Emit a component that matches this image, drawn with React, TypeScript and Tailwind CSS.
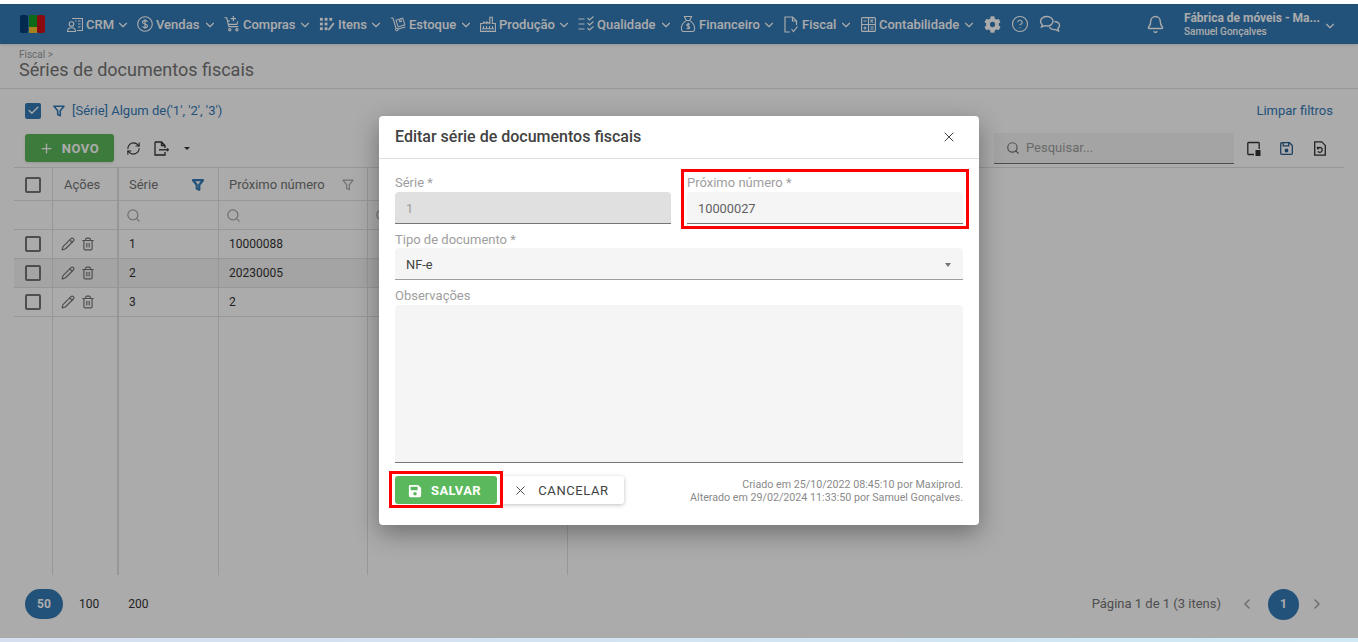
import React from 'react';
import { ChevronDown, ChevronLeft, ChevronRight, CircleHelp, Bell, RefreshCw, Plus, X, Search, Pencil, Trash2, Check } from 'lucide-react';
import { FaCog, FaSave } from 'react-icons/fa';

const Crm = () => (
  <svg width="16" height="17" viewBox="0 0 16 17" fill="none" stroke="currentColor" strokeWidth="1.1" className="shrink-0">
    <circle cx="4.500" cy="8" r="2.300" /><path d="M.5 15.500c0-2.500 1.500-3.700 4-3.700s4 1.200 4 3.700z" />
    <path d="M5 2.500h10.500v12H10" /><path d="M8 5h1.500M11 5h2.500M11 8h2.500M11 11h2.500" />
  </svg>
);
const Dollar = () => (
  <svg width="16" height="16" viewBox="0 0 16 16" fill="none" stroke="currentColor" strokeWidth="1.100" className="shrink-0">
    <circle cx="8" cy="8" r="7.300" />
    <path d="M10.500 5.700C10 4.300 5.500 4 5.500 6.200c0 2.300 5 1.300 5 3.700 0 2.200-4.500 2-5 .5M8 3v10" />
  </svg>
);
const Cart = () => (
  <svg width="16" height="18" viewBox="0 0 18 20" fill="none" stroke="currentColor" strokeWidth="1.300" className="shrink-0">
    <path d="M.5 3h2.500l2.500 10h10.500" /><path d="M4 6.500h2.500M15.500 7l-1 3.500H5" /><path d="M10.500 1v6M7.500 4h6" />
    <circle cx="6.500" cy="16.500" r="1.300" /><circle cx="14.500" cy="16.500" r="1.300" />
  </svg>
);
const Itens = () => (
  <svg width="16" height="16" viewBox="0 0 17 17" fill="currentColor" className="shrink-0">
    <rect x="1" y="2" width="3" height="3" /><rect x="6" y="2" width="3" height="3" /><rect x="11" y="2" width="3" height="3" />
    <rect x="1" y="7" width="3" height="3" /><rect x="6" y="7" width="3" height="3" />
    <rect x="1" y="12" width="3" height="3" /><rect x="6" y="12" width="3" height="3" />
    <path d="M10 13.500 15 7l1.500 1.200-5 6.500-2 .6z" />
  </svg>
);
const Truck = () => (
  <svg width="17" height="16" viewBox="0 0 20 18" fill="none" stroke="currentColor" strokeWidth="1.200" className="shrink-0">
    <path d="M1 2h2.500l3.500 12" /><circle cx="8" cy="15.500" r="1.500" /><path d="M9.500 15 18 12.500" />
    <path d="M7 4.500 15 2l2.500 8-8 2.500z" /><path d="M10.500 3.500l1 3 2-.6-1-3" />
  </svg>
);
const FactoryIcon = () => (
  <svg width="16" height="16" viewBox="0 0 16 16" fill="none" stroke="currentColor" strokeWidth="1.100" className="shrink-0">
    <path d="M.6 15.400V7.500h3.200V6l3 1.500V6l3 1.500V1.200h2.500v6.300h3.100v7.900z" />
    <path d="M3.500 10v2.700M6.500 10v2.700M9.500 10v2.700M12.500 10v2.700M2 12.800h12" />
  </svg>
);
const Checks = () => (
  <svg width="16" height="16" viewBox="0 0 16 16" fill="none" stroke="currentColor" strokeWidth="1.100" className="shrink-0">
    <path d="M.5 3h6M.5 8h6M.5 13h6" />
    <path d="M9.500 2l2 2 4-3.500M9.500 7l2 2 4-3.500M9.500 12l2 2 4-3.500" />
  </svg>
);
const Bag = () => (
  <svg width="16" height="18" viewBox="0 0 18 20" fill="none" stroke="currentColor" strokeWidth="1.200" className="shrink-0">
    <path d="M5 1.500h8l-2 4.500H7z" /><path d="M6.500 6.500C3 9 1.500 12 1.500 15c0 2.500 1.500 3.500 3.500 3.500h8c2 0 3.500-1 3.500-3.500 0-3-1.500-6-5-8.500" />
    <path d="M11 10.500c-.5-.8-3.500-1-3.500.7 0 1.800 3.500 1 3.500 2.800 0 1.700-3 1.500-3.500.7M9.200 8.500v7.500" />
  </svg>
);
const Doc = () => (
  <svg width="14" height="17" viewBox="0 0 14 17" fill="none" stroke="currentColor" strokeWidth="1.200" className="shrink-0">
    <path d="M6 16H1V1h7.500L12.500 5v4" /><path d="M8.500 1v4h4" /><path d="M7.500 13l2 2.500 4-5" />
  </svg>
);
const Calc = () => (
  <svg width="15" height="15" viewBox="0 0 15 15" fill="none" stroke="currentColor" strokeWidth="1.100" className="shrink-0">
    <rect x=".6" y=".6" width="13.800" height="13.800" rx="1" /><path d="M7.500 .6v13.800M.6 7.500h13.800" />
    <path d="M2.500 4h3M9.500 2.500l2.500 3M12 2.500l-2.500 3M4 9.500v3M2.500 11h3M9.500 10h3M9.500 12h3" />
  </svg>
);
const Chats = () => (
  <svg width="22" height="18" viewBox="0 0 22 18" fill="none" stroke="currentColor" strokeWidth="1.400" className="shrink-0">
    <path d="M8 1.500c-3.500 0-6.500 2-6.500 4.800 0 1.400.7 2.500 1.800 3.400L2.500 12l3.300-1.300c.7.200 1.400.3 2.200.3 3.500 0 6-2.200 6-4.700S11.500 1.500 8 1.500z" />
    <path d="M15.500 6.500c2.700.3 5 1.800 5 4 0 1.200-.6 2.200-1.600 2.900l.6 2.600-3-1.400c-2.700.3-5-.6-6-2.600" />
  </svg>
);
const Filter = ({ className, w = 1.600 }: { className?: string; w?: number }) => (
  <svg width="12" height="12" viewBox="0 0 12 12" fill="none" stroke="currentColor" strokeWidth={w} className={className}>
    <path d="M1 1.200h10L7.300 5.800v5L4.700 9.500V5.800z" strokeLinejoin="round" />
  </svg>
);
const ExportDoc = () => (
  <svg width="15" height="15" viewBox="0 0 15 15" fill="none" stroke="currentColor" strokeWidth="1.300" className="shrink-0">
    <path d="M1 1h6.500L11 4.500V7M7.500 1v3.500H11M1 1v13h10v-3" /><path d="M5 8.800h8.500" /><path d="M13 7.500l1.300 1.300L13 10.100" />
  </svg>
);
const PanelDoc = () => (
  <svg width="14" height="15" viewBox="0 0 14 15" fill="none" className="shrink-0">
    <path d="M7 13.500H1.500a.7.7 0 0 1-.7-.7V2.200a.7.7 0 0 1 .7-.7h10a.7.7 0 0 1 .7.7V8" stroke="currentColor" strokeWidth="1.300" />
    <rect x="8.500" y="9" width="5" height="6" fill="currentColor" />
  </svg>
);
const Disk = () => (
  <svg width="13" height="13" viewBox="0 0 13 13" fill="none" stroke="currentColor" strokeWidth="1.300" className="shrink-0">
    <path d="M1.700.7h7.800l2.800 2.800v7.800a1 1 0 0 1-1 1H1.700a1 1 0 0 1-1-1V1.700a1 1 0 0 1 1-1z" /><path d="M3.200 1v2.800h5.500V1" />
    <circle cx="6.500" cy="8.500" r="1.300" fill="currentColor" />
  </svg>
);
const RestoreDoc = () => (
  <svg width="12" height="15" viewBox="0 0 12 15" fill="none" stroke="currentColor" strokeWidth="1.300" className="shrink-0">
    <path d="M.7.8h7l3.600 3.600v9.800H.7z" /><path d="M3.800 7.200a2.500 2.500 0 1 1 0 3.200" /><path d="M3.500 5.800v1.800h1.800" />
  </svg>
);
const Box = ({ checked }: { checked?: boolean }) => checked ? (
  <span className="flex h-4 w-4 items-center justify-center rounded-[2px] bg-[#337ab7] text-white"><Check size={13} strokeWidth={2.500} /></span>
) : (
  <span className="block h-4 w-4 rounded-[2px] border-2 border-[#757575]" />
);

const nav: [React.ReactNode, string, string][] = [
  [<Crm />, 'CRM', 'w-[28px]'],
  [<Dollar />, 'Vendas', 'w-[45px]'],
  [<Cart />, 'Compras', 'w-[53px]'],
  [<Itens />, 'Itens', 'w-[29px]'],
  [<Truck />, 'Estoque', 'w-[48px]'],
  [<FactoryIcon />, 'Produção', 'w-[56px]'],
  [<Checks />, 'Qualidade', 'w-[60px]'],
  [<Bag />, 'Financeiro', 'w-[61px]'],
  [<Doc />, 'Fiscal', 'w-[35px]'],
  [<Calc />, 'Contabilidade', 'w-[81px]'],
];

const cell = 'flex h-[29px] items-center border-b border-[#e2e2e2]';
const rows = [['1', '10000088'], ['2', '20230005'], ['3', '2']];

function Column({ className, head, filter, children, rowClass }: { className: string; head: React.ReactNode; filter?: React.ReactNode; children: (row: string[], i: number) => React.ReactNode; rowClass?: string }) {
  return (
    <div className={`flex shrink-0 flex-col border-r border-[#e2e2e2] ${className}`}>
      <div className={`flex h-[33px] items-center border-b border-[#e2e2e2] pt-[1px] text-[13px] text-[#757575] ${rowClass ?? ''}`}>{head}</div>
      <div className={`${cell} text-[#a8a8a8] ${rowClass ?? ''}`}>{filter}</div>
      {rows.map((r, i) => (
        <div key={i} className={`${cell} text-[12px] text-[#333] ${i === 1 ? 'bg-[#f5f5f5]' : ''} ${rowClass ?? ''}`}>{children(r, i)}</div>
      ))}
    </div>
  );
}

export default function App() {
  return (
    <div className="flex h-[642px] w-[1358px] flex-col overflow-hidden bg-white font-['Roboto',sans-serif]">
      <div className="h-1 shrink-0 bg-white" />
      <main className="relative flex min-h-0 flex-1 flex-col bg-white">
        <header className="flex h-10 shrink-0 items-center bg-[#337ab7] text-white shadow-sm">
          <div className="ml-5 mr-[22px] flex h-[18px] w-[25px] shrink-0 gap-[0.5px]">
            <span className="h-full w-2 rounded-[2px] bg-[#033f7a]" />
            <span className="flex h-full w-2 flex-col">
              <span className="h-[12px] bg-[#159e24]" /><span className="flex-1 bg-[#f5c02a]" />
            </span>
            <span className="h-full w-2 rounded-[2px] bg-[#d00f18]" />
          </div>
          <nav className="flex items-center gap-[7.5px]">
            {nav.map(([icon, label, w]) => (
              <div key={label} className="flex items-center">
                <span className="flex w-4 justify-center">{icon}</span>
                <span className={`ml-[3px] whitespace-nowrap pt-[1px] text-[13px] font-medium ${w}`}>{label}</span>
                <ChevronDown size={14} className="ml-[1.500px] mt-[1px]" />
              </div>
            ))}
          </nav>
          <div className="ml-[8px] flex items-center gap-[10px]">
            <FaCog size={17} />
            <CircleHelp size={18} strokeWidth={1.500} />
            <Chats />
          </div>
          <Bell size={19} strokeWidth={1.800} className="ml-auto" />
          <div className="ml-[19px] flex w-[139px] flex-col leading-none">
            <span className="whitespace-nowrap text-[12px] font-bold">Fábrica de móveis - Ma...</span>
            <span className="mt-[3px] whitespace-nowrap text-[10px] font-medium">Samuel Gonçalves</span>
          </div>
          <ChevronDown size={14} className="mr-[21px] mt-[3px]" />
        </header>

        <div className="flex h-[45px] shrink-0 flex-col border-b border-[#e2e2e2] pl-[19px] pt-[6px]">
          <span className="text-[10px] leading-[10px] text-[#9a9a9a]">Fiscal &gt;</span>
          <span className="text-[18px] leading-[20px] text-[#757575]">Séries de documentos fiscais</span>
        </div>

        <div className="flex h-[43px] shrink-0 items-center px-[25px]">
          <Box checked />
          <Filter className="ml-[12px] text-[#337ab7]" />
          <span className="ml-[7px] text-[13px] text-[#337ab7]">[Série] Algum de('1', '2', '3')</span>
          <span className="ml-auto text-[13px] text-[#337ab7]">Limpar filtros</span>
        </div>

        <div className="flex h-[35px] shrink-0 items-center pb-[3px] pl-[25px]">
          <div className="flex h-7 w-[89px] items-center justify-center gap-[8px] rounded-[3px] bg-[#5cb85c] pr-[1px] pt-[1px] text-[13px] font-bold tracking-[0.5px] text-white shadow">
            <Plus size={15} strokeWidth={2} />NOVO
          </div>
          <RefreshCw size={15} strokeWidth={1.700} className="ml-[12px] text-[#333]" />
          <span className="ml-[13px] text-[#333]"><ExportDoc /></span>
          <span className="ml-[15px] h-0 w-0 border-x-[3px] border-t-[3px] border-x-transparent border-t-[#333]" />
          <div className="ml-[804px] flex h-[31px] w-[240px] items-center gap-[6px] border-b border-[#757575] bg-[#f5f5f5] pl-[12px] pt-[1px] text-[#9e9e9e]">
            <Search size={14} className="text-[#757575]" />
            <span className="text-[13px]">Pesquisar...</span>
          </div>
          <span className="ml-[13px] text-[#333]"><PanelDoc /></span>
          <span className="ml-[19px] text-[#2a5f90]"><Disk /></span>
          <span className="ml-[21px] text-[#333]"><RestoreDoc /></span>
        </div>

        <div className="mx-[14px] flex min-h-0 flex-1 border-t border-[#e2e2e2]">
          <Column className="w-[39px]" rowClass="pl-[11px]" head={<Box />}>{() => <Box />}</Column>
          <Column className="w-[66px] border-r-2" rowClass="pl-[8px]" head={<span className="pl-[3px]">Ações</span>}>
            {() => <span className="flex gap-[6px] text-[#757575]"><Pencil size={14} /><Trash2 size={14} /></span>}
          </Column>
          <Column className="w-[100px]" rowClass="px-[10px]" head={<><span>Série</span><Filter className="ml-auto mr-[4px] text-[#337ab7]" w={2.200} /></>} filter={<Search size={15} className="-ml-[3px]" />}>
            {(r) => r[0]}
          </Column>
          <Column className="w-[149px]" rowClass="px-[10px]" head={<><span>Próximo número</span><Filter className="ml-auto mr-[3px] text-[#a8a8a8]" w={1.200} /></>} filter={<Search size={15} className="-ml-[3px]" />}>
            {(r) => r[1]}
          </Column>
          <Column className="w-[200px]" rowClass="px-[10px]" head={null} filter={<Search size={15} className="-ml-[3px]" />}>{() => null}</Column>
        </div>

        <div className="flex h-[63px] shrink-0 items-center px-[25px] pb-[5px] text-[12px]">
          <span className="flex h-[30px] w-[38px] items-center justify-center rounded-[15px] bg-[#337ab7] font-bold text-white">50</span>
          <span className="ml-[16px] text-[#333]">100</span>
          <span className="ml-[29px] text-[#333]">200</span>
          <span className="ml-auto text-[13px] text-[#757575]">Página 1 de 1 (3 itens)</span>
          <ChevronLeft size={16} className="ml-[18px] text-[#9e9e9e]" />
          <span className="ml-[13px] flex h-[31px] w-[31px] items-center justify-center rounded-full bg-[#337ab7] font-bold text-white">1</span>
          <ChevronRight size={16} className="ml-[10px] mr-[8px] text-[#9e9e9e]" />
        </div>

        <div className="absolute inset-0 flex items-center justify-center bg-black/33 pb-[1px]">
          <div className="w-[600px] rounded-[4px] bg-white shadow-[0_8px_24px_rgba(0,0,0,0.35)]">
            <div className="flex h-[43px] items-center justify-between border-b border-[#e0e0e0] pl-4 pr-[22px]">
              <span className="text-[16px] font-medium leading-none text-[#424242]">Editar série de documentos fiscais</span>
              <X size={16} strokeWidth={1.500} className="text-[#424242]" />
            </div>
            <div className="px-4 pt-[15px]">
              <div className="flex gap-4">
                <div className="flex-1">
                  <div className="h-[18px] text-[13px] leading-[17px] text-[#9e9e9e]">Série *</div>
                  <div className="flex h-[32px] items-center rounded-t-[4px] border-b border-[#757575] bg-[#e0e0e0] pl-[11px] pt-[2px] text-[12.800px] text-[#9e9e9e]">1</div>
                </div>
                <div className="relative flex-1">
                  <div className="h-[18px] text-[13px] leading-[17px] text-[#9e9e9e]">Próximo número *</div>
                  <div className="flex h-[32px] items-center rounded-t-[4px] border-b border-[#757575] bg-[#f5f5f5] pl-[11px] pt-[2px] text-[12.800px] text-[#616161]">10000027</div>
                  <span className="absolute -left-[6px] -right-[6px] -top-[5px] -bottom-[5px] border-[3px] border-[#ff0000]" />
                </div>
              </div>
              <div className="mt-[7px] h-[17px] text-[13px] leading-[17px] text-[#9e9e9e]">Tipo de documento *</div>
              <div className="flex h-[32px] items-center justify-between rounded-t-[4px] border-b border-[#9e9e9e] bg-[#f5f5f5] pl-[11px] pr-[12px] pt-[2px] text-[12.800px] text-[#424242]">
                NF-e
                <span className="h-0 w-0 border-x-[3.500px] border-t-[4px] border-x-transparent border-t-[#757575]" />
              </div>
              <div className="mt-[7px] h-[18px] text-[13px] leading-[18px] text-[#9e9e9e]">Observações</div>
              <div className="h-[158px] rounded-t-[4px] border-b border-[#757575] bg-[#f5f5f5]" />
              <div className="mt-[13px] flex pb-[21px]">
                <div className="relative h-7 w-[102px] shrink-0">
                  <div className="flex h-full items-center justify-center gap-[9px] rounded-[3px] bg-[#5cb85c] pr-[3px] pt-[1px] text-[13px] font-bold tracking-[0.4px] text-white">
                    <FaSave size={14} />SALVAR
                  </div>
                  <span className="absolute -left-[6px] -right-[6px] -top-[5px] -bottom-[4px] border-[3px] border-[#ff0000]" />
                </div>
                <div className="ml-[5px] flex h-7 w-[122px] shrink-0 items-center justify-center gap-[10px] rounded-r-[3px] bg-white pr-[4px] pt-[1px] text-[13px] tracking-[0.6px] text-[#424242] shadow-[0_1px_4px_rgba(0,0,0,0.25)]">
                  <X size={15} strokeWidth={1.500} />CANCELAR
                </div>
                <div className="ml-auto mt-[2px] text-right text-[10.700px] leading-[13px] text-[#8a8a8a]">
                  <div>Criado em 25/10/2022 08:45:10 por Maxiprod.</div>
                  <div>Alterado em 29/02/2024 11:33:50 por Samuel Gonçalves.</div>
                </div>
              </div>
            </div>
          </div>
        </div>
      </main>
      <div className="h-1 shrink-0 bg-gradient-to-r from-[#d6dff0] to-[#cfe9f5]" />
    </div>
  );
}
